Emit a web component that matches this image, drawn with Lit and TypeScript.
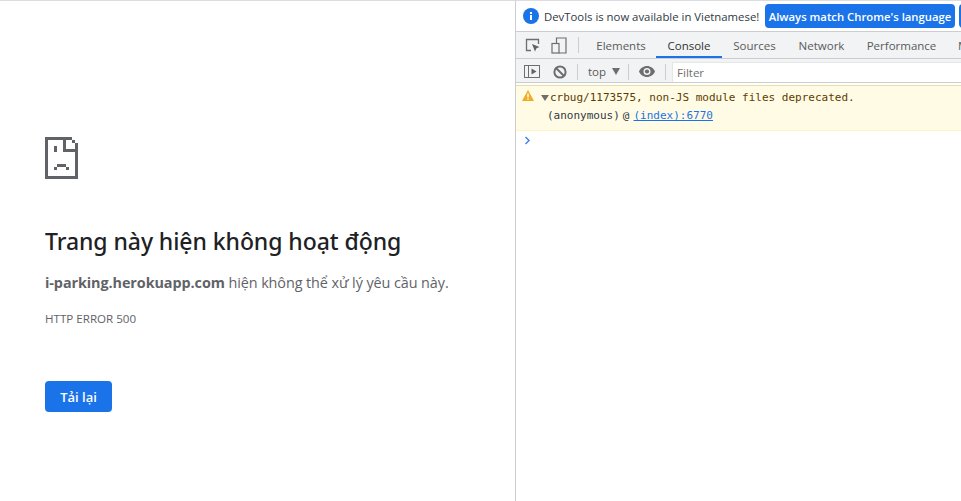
import { LitElement, html, css, svg } from "lit";
import { customElement } from "lit/decorators.js";

@customElement("app-root")
export class AppRoot extends LitElement {
  static styles = css`
    :host { display: flex; width: 961px; height: 501px; overflow: hidden; background: #fff; font-family: "Open Sans", "Noto Sans", sans-serif; }
    .page { width: 515px; height: 501px; box-sizing: border-box; border-top: 1px solid #dadce0; padding: 136px 0 0 45px; color: #5f6368; flex: none; }
    .sad { display: block; width: 33px; height: 42px; }
    h1 { margin: 47px 0 0; font-size: 23px; line-height: 30px; font-weight: 500; color: #202124; font-family: "Noto Sans", sans-serif; letter-spacing: -0.07px; white-space: nowrap; }
    .desc { margin: 15px 0 0; font-size: 14.4px; line-height: 24px; white-space: nowrap; letter-spacing: -0.08px; }
    .desc b { font-weight: 700; }
    .code { margin: 16px 0 0; font-size: 11.6px; line-height: 16px; white-space: nowrap; }
    button.reload { display: block; margin-top: 54px; width: 67px; height: 31px; border: 0; border-radius: 4px; background: #1a73e8; color: #fff; font: 600 13px "Open Sans", sans-serif; padding: 0; }
    .dt { flex: 1; min-width: 0; border-left: 1px solid #cbcdd1; border-top: 1px solid #dadce0; display: flex; flex-direction: column; overflow: hidden; }
    .info { height: 30px; display: flex; align-items: center; padding: 0 0 0 7px; gap: 5px; border-bottom: 1px solid #cbcdd1; color: #303942; font-size: 11.35px; white-space: nowrap; flex: none; }
    .info svg { width: 16px; height: 16px; flex: none; }
    .info span { width: 215px; flex: none; }
    .lang { height: 24px; border: 0; border-radius: 4px; background: #1a73e8; color: #fff; font: 600 11.3px "Open Sans", sans-serif; padding: 0; width: 190px; flex: none; white-space: nowrap; margin-left: 1px; }
    .lang + .lang { width: 20px; margin-left: -1px; }
    .tabs { height: 26px; display: flex; align-items: stretch; background: #f1f3f4; border-bottom: 1px solid #cbcdd1; flex: none; font-size: 11.5px; color: #5a5a5a; white-space: nowrap; overflow: hidden; }
    .tool { display: flex; align-items: center; justify-content: center; flex: none; }
    .t34 { width: 34px; }
    .t18 { width: 18px; }
    .t32 { width: 32px; }
    .t24 { width: 24px; }
    .s10 { width: 10px; flex: none; }
    .s5 { width: 5px; flex: none; }
    .s8 { width: 8px; flex: none; }
    .s7 { width: 7px; flex: none; }
    .tabs svg, .bar svg { display: block; flex: none; }
    .sep { width: 1px; height: 16px; background: #cbcdd1; align-self: center; flex: none; }
    .tab { display: flex; align-items: center; justify-content: center; flex: none; box-sizing: border-box; }
    .tab.on { color: #333; border-bottom: 2px solid #1a73e8; padding-top: 2px; }
    .w70 { width: 70px; }
    .w66 { width: 66px; }
    .w65 { width: 65px; }
    .w69 { width: 69px; }
    .w91 { width: 91px; }
    .mem { padding-left: 11px; }
    .bar { height: 21px; padding-top: 2px; display: flex; align-items: center; background: #f1f3f4; border-bottom: 1px solid #cbcdd1; flex: none; font-size: 11.5px; color: #5a5a5a; }
    .top { margin-left: 10px; }
    .caret { margin-left: 6px; }
    .eye { margin: 0 10px; }
    .filter { flex: 1; height: 20px; align-self: flex-end; box-sizing: border-box; background: #fff; border: 1px solid #e4e6e8; border-right: 0; border-bottom: 0; margin-left: 6px; padding-left: 4px; line-height: 20px; color: #707070; }
    .gap { height: 2px; background: #fff; border-bottom: 1px solid #e6dfa8; flex: none; }
    .warn { background: #fffbe5; border-bottom: 1px solid #fff5c2; height: 45px; box-sizing: border-box; font: 11px/18px "DejaVu Sans Mono", monospace; color: #5c3c00; position: relative; padding: 3px 0 0 24px; white-space: nowrap; flex: none; }
    .warn svg.t { position: absolute; left: 6px; top: 4px; }
    .warn .tri { display: inline-block; width: 0; height: 0; border: 4px solid transparent; border-top: 6px solid #6e6e6e; border-bottom: 0; margin: 0 1px 0 1px; }
    .warn .stack { color: #303942; padding-left: 7px; }
    .warn .at { margin-left: 3px; }
    .warn a { color: #1a73e8; text-decoration: underline; margin-left: 4px; }
    .prompt { height: 20px; padding: 5px 0 0 8px; box-sizing: border-box; flex: none; }
    .prompt svg { display: block; }
  `;

  sad() {
    const cells: [number, number, number, number][] = [
      [0, 0, 9, 1], [0, 0, 1, 14], [0, 13, 11, 1], [10, 2, 1, 12],
      [9, 1, 1, 1], [6, 0, 1, 5], [6, 4, 4, 1],
      [3, 3, 1, 2], [4, 9, 3, 1], [3, 10, 1, 1], [7, 10, 1, 1],
    ];
    return html`<svg class="sad" viewBox="0 0 33 42" shape-rendering="crispEdges" fill="#5f6368">
      ${cells.map(([x, y, w, h]) => svg`<rect x=${x * 3} y=${y * 3} width=${w * 3} height=${h * 3}></rect>`)}
    </svg>`;
  }

  render() {
    return html`
      <main class="page">
        ${this.sad()}
        <h1>Trang này hiện không hoạt động</h1>
        <p class="desc"><b>i-parking.herokuapp.com</b> hiện không thể xử lý yêu cầu này.</p>
        <div class="code">HTTP ERROR 500</div>
        <button class="reload">Tải lại</button>
      </main>
      <section class="dt">
        <div class="info">
          <svg viewBox="0 0 16 16"><circle cx="8" cy="8" r="8" fill="#1a73e8"></circle><rect x="7" y="7" width="2" height="5" fill="#fff"></rect><rect x="7" y="4" width="2" height="2" fill="#fff"></rect></svg>
          <span>DevTools is now available in Vietnamese!</span>
          <button class="lang">Always match Chrome's language</button>
          <button class="lang"></button>
        </div>
        <div class="tabs">
          <div class="tool t34">
            <svg width="16" height="16" viewBox="0 0 16 16" fill="none"><path d="M6 13.500H1.500V2.500h12V7" stroke="#6e6e6e" stroke-width="1.300"></path><path d="M7 7l7.500 3-3 1.200L10 14.500z" fill="#5f6368"></path></svg>
          </div>
          <div class="tool t18">
            <svg width="16" height="17" viewBox="0 0 16 17" fill="none" stroke="#6e6e6e" stroke-width="1.200"><path d="M5.500 6V1h9.500v15H8"></path><rect x="1" y="6.500" width="7" height="9.500"></rect></svg>
          </div>
          <div class="s10"></div>
          <div class="sep"></div>
          <div class="s7"></div>
          <div class="tab w70">Elements</div>
          <div class="tab on w66">Console</div>
          <div class="tab w65">Sources</div>
          <div class="tab w69">Network</div>
          <div class="tab w91">Performance</div>
          <div class="tab mem">Memory</div>
        </div>
        <div class="bar">
          <div class="tool t32">
            <svg width="16" height="13" viewBox="0 0 16 13" fill="none"><rect x=".5" y=".5" width="15" height="12" stroke="#6e6e6e"></rect><path d="M4.500 1v11" stroke="#6e6e6e"></path><path d="M7.500 3.500l5 3-5 3z" fill="#5f6368"></path></svg>
          </div>
          <div class="tool t24">
            <svg width="14" height="14" viewBox="0 0 14 14" fill="none" stroke="#6e6e6e" stroke-width="2"><circle cx="7" cy="7" r="5.600"></circle><path d="M3 3l8 8"></path></svg>
          </div>
          <div class="s5"></div>
          <div class="sep"></div>
          <div class="top">top</div>
          <svg class="caret" width="8" height="7" viewBox="0 0 8 7"><path d="M0 0h8L4 7z" fill="#6e6e6e"></path></svg>
          <div class="s8"></div>
          <div class="sep"></div>
          <svg class="eye" width="16" height="11" viewBox="0 0 16 11"><path d="M8 0C4.400 0 1.400 2.300 0 5.500 1.400 8.700 4.400 11 8 11s6.600-2.300 8-5.500C14.600 2.300 11.600 0 8 0zm0 9a3.500 3.500 0 110-7 3.500 3.500 0 010 7z" fill="#6e6e6e"></path><circle cx="8" cy="5.500" r="2.100" fill="#6e6e6e"></circle></svg>
          <div class="sep"></div>
          <div class="filter">Filter</div>
        </div>
        <div class="gap"></div>
        <div class="warn">
          <svg class="t" width="12" height="11" viewBox="0 0 12 11"><path d="M6 0l6 11H0z" fill="#f2ab26"></path><rect x="5.300" y="3.500" width="1.400" height="4" fill="#fff"></rect><rect x="5.300" y="8.300" width="1.400" height="1.400" fill="#fff"></rect></svg>
          <div><span class="tri"></span>crbug/1173575, non-JS module files deprecated.</div>
          <div class="stack">(anonymous)<span class="at">@</span><a>(index):6770</a></div>
        </div>
        <div class="prompt"><svg width="7" height="9" viewBox="0 0 7 9" fill="none" stroke="#4285f4" stroke-width="1.500"><path d="M1.500 1l3.500 3.500L1.500 8"></path></svg></div>
      </section>
    `;
  }
}
